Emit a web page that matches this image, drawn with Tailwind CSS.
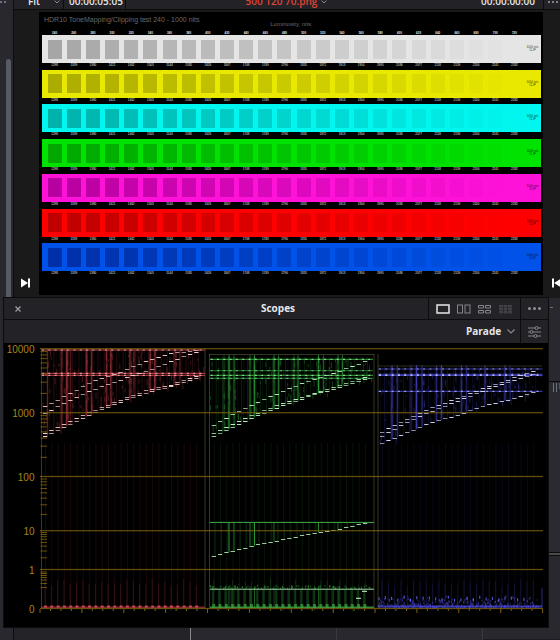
<!DOCTYPE html>
<html lang="en">
<head>
    <meta charset="UTF-8">
    <meta name="viewport" content="width=device-width, initial-scale=1.0">
    <title>Scopes</title>
    <script src="https://cdn.jsdelivr.net/npm/@tailwindcss/browser@4"></script>
</head>
<body class="h-screen overflow-hidden bg-[#28282e] font-['Open_Sans',sans-serif]">
    <div class="relative flex h-full flex-col">

        <!-- Viewer -->
        <div class="flex h-[298px] shrink-0">
            <div class="flex w-[13px] shrink-0 flex-col items-end">
                <div class="flex h-[59px] w-full gap-[2px] pt-px">
                    <span class="h-[2px] w-[2px] bg-gray-500"></span>
                    <span class="h-[2px] w-[2px] bg-gray-500"></span>
                </div>
                <div class="mr-[2px] w-[5px] flex-1 rounded-t bg-[#565b63]"></div>
            </div>

            <div class="flex min-w-0 flex-1 flex-col border-l border-[#0c0c0e] bg-[#1a1a1a]">
                <div class="flex h-[10px] items-end overflow-hidden border-b border-[#0c0c0e] bg-[#222227] text-[10px] leading-[15px] font-semibold text-gray-200">
                    <div class="flex flex-1 items-end">
                        <button class="flex h-[15px] w-[49px] items-center justify-between pl-[14px] pr-[3px]">Fit
                            <svg class="size-[6px]" viewBox="0 0 6 6" fill="none" stroke="#888"><path d="M.5 1.500 3 4l2.500-2.500"/></svg>
                        </button>
                        <span class="h-[15px] w-[63px] border-x border-[#0c0c0e] pl-[5px]">00:00:05:05</span>
                    </div>
                    <button class="flex h-[15px] items-center gap-1 pl-6 text-[#e04535]">500 120 70.png
                        <svg class="size-[6px]" viewBox="0 0 6 6" fill="none" stroke="#888"><path d="M.5 1.500 3 4l2.500-2.500"/></svg>
                    </button>
                    <span class="h-[15px] flex-1 pr-2 text-right">00:00:00:00</span>
                    <button class="flex h-[15px] w-[17px] items-center gap-[2px] border-l border-[#0c0c0e] pl-1" aria-label="Options">
                        <span class="size-[2px] rounded-full bg-gray-400"></span>
                        <span class="size-[2px] rounded-full bg-gray-400"></span>
                        <span class="size-[2px] rounded-full bg-gray-400"></span>
                    </button>
                </div>

                <div class="flex flex-1 pb-[3px] pt-[2px]">
                    <div class="flex w-[25px] items-end pb-[7px] pl-[7px]">
                        <button aria-label="Next clip">
                            <svg class="block h-[10px] w-[9px]" viewBox="0 0 9 10" fill="#fff"><path d="M0 .5 7 5 0 9.500zM7 .5h2v9H7z"/></svg>
                        </button>
                    </div>
                    <div class="min-w-0 flex-1 bg-black pr-[2px] pl-[3px] font-['Liberation_Sans',sans-serif]">
                        <div class="grid h-[19px] grid-cols-[1fr_auto_1fr] px-[2px] pt-[4px] text-[#686868]">
                            <h1 class="whitespace-nowrap text-[7px] leading-[8px]">HDR10 ToneMapping/Clipping test 240 - 1000 nits</h1>
                            <p class="pt-[4px] text-[6px] leading-[8px]">Luminosity, nits:</p>
                        </div>
                        <div id="topLabels" class="grid h-[4px] grid-cols-[repeat(25,1fr)_17px] pl-[3px] text-center text-[3px] leading-[4px] font-bold text-gray-200"></div>
                        <div id="bars" class="grid h-[243px] auto-rows-fr"></div>
                    </div>
                    <div class="flex w-[17px] items-end overflow-hidden pb-[7px] pl-[9px]">
                        <button aria-label="Previous clip">
                            <svg class="block h-[10px] w-[9px]" viewBox="0 0 9 10" fill="#fff"><path d="M9 .5 2 5l7 4.500zM0 .5h2v9H0z"/></svg>
                        </button>
                    </div>
                </div>
            </div>
        </div>

        <!-- Timeline panels, mostly behind the scopes window -->
        <div class="flex min-h-0 flex-1">
            <div class="w-[14px] border-r border-[#0c0c0e]"></div>
            <div class="w-[177px] border-r border-[#8a8a8e] bg-[#232328]"></div>
            <div class="w-[146px] border-r border-[#39393f]"></div>
            <div class="w-[146px] border-r border-[#39393f]"></div>
            <div class="flex flex-1 flex-col items-end border-b border-[#1c1c20]">
                <div class="h-[10px] w-[11px] pl-px"><div class="mt-[9px] h-px w-[3px] bg-gray-500"></div></div>
                <div class="h-[74px] w-[11px] border-b border-[#0c0c0e]"></div>
                <div class="flex h-[170px] w-[11px] gap-[2px] bg-[#2a2a30] pl-[4px]">
                    <span class="mt-px h-[9px] w-px bg-gray-500"></span>
                    <span class="mt-px h-[9px] w-px bg-gray-500"></span>
                    <span class="mt-px h-[6px] w-px bg-gray-600"></span>
                </div>
                <div class="h-[4px] w-[11px] border-y border-[#0c0c0e] bg-[#4a4a48]"></div>
            </div>
        </div>

        <!-- Scopes window -->
        <section class="absolute left-[3px] right-[11px] top-[297px] border border-[#0c0c0e] bg-[#222227]">
            <header class="grid h-[22px] grid-cols-[1fr_auto_1fr] items-center border-b border-[#0c0c0e]">
                <button class="ml-[11px] size-[6px]" aria-label="Close">
                    <svg class="block size-[6px]" viewBox="0 0 6 6" stroke="#a0a0a0" stroke-width="1.200"><path d="M.5.5l5 5M5.500.5l-5 5"/></svg>
                </button>
                <h2 class="pl-1 text-[10px] font-bold text-gray-200">Scopes</h2>
                <div class="flex h-full justify-end">
                    <div class="flex items-center gap-[7px] border-l border-[#0c0c0e] px-[7px]">
                        <button aria-label="Single view"><svg class="block h-[10px] w-[14px]" viewBox="0 0 14 10" fill="none" stroke="#e8e8e8" stroke-width="1.500"><rect x="1" y="1" width="12" height="8"/></svg></button>
                        <button aria-label="Two views"><svg class="block h-[10px] w-[14px]" viewBox="0 0 14 10" fill="none" stroke="#85858a"><rect x=".5" y="1" width="5" height="8"/><rect x="8" y="1" width="5" height="8"/></svg></button>
                        <button aria-label="Four views"><svg class="block h-[10px] w-[14px]" viewBox="0 0 14 10" fill="none" stroke="#85858a"><path d="M.5 1.500h5v2.500h-5zM7.500 1.500h5v2.500h-5zM.5 6.500h5v2.500h-5zM7.500 6.500h5v2.500h-5z"/></svg></button>
                        <button aria-label="Nine views"><svg class="block h-[10px] w-[14px]" viewBox="0 0 14 10" fill="#2c2c31" stroke="#45454b"><path d="M.5 1.500h3v1.500h-3zM5 1.500h3v1.500H5zM9.500 1.500h3v1.500h-3zM.5 4.500h3V6h-3zM5 4.500h3V6H5zM9.500 4.500h3V6h-3zM.5 7.500h3V9h-3zM5 7.500h3V9H5zM9.500 7.500h3V9h-3z"/></svg></button>
                    </div>
                    <button class="flex w-[28px] items-center justify-center gap-[2px] border-l border-[#0c0c0e]" aria-label="Scope options">
                        <span class="size-[3px] rounded-full bg-[#909095]"></span>
                        <span class="size-[3px] rounded-full bg-[#909095]"></span>
                        <span class="size-[3px] rounded-full bg-[#909095]"></span>
                    </button>
                </div>
            </header>
            <div class="flex h-[23px] justify-end">
                <label class="flex items-center pr-[5px]">
                    <select class="appearance-none bg-transparent text-[10px] font-bold text-gray-200" aria-label="Scope type">
                        <option>Parade</option>
                    </select>
                    <svg class="ml-[5px] h-[5px] w-[8px]" viewBox="0 0 8 5" fill="none" stroke="#8a8a90" stroke-width="1.200"><path d="M.5.5 4 4 7.500.5"/></svg>
                </label>
                <button class="flex w-[28px] items-center justify-center border-l border-[#0c0c0e]" aria-label="Scope settings">
                    <svg class="h-[12px] w-[13px]" viewBox="0 0 13 12" fill="#222227" stroke="#85858a"><path d="M0 2h13M0 6h13M0 10h13"/><circle cx="8.500" cy="2" r="1.500"/><circle cx="3.500" cy="6" r="1.500"/><circle cx="7.500" cy="10" r="1.500"/></svg>
                </button>
            </div>
            <svg id="parade" class="block h-auto w-full bg-black" viewBox="0 0 544 284" role="img" aria-label="RGB parade"></svg>
        </section>
    </div>

    <script>
        // ---- Test pattern ----
        const bars = [
            { color: '#e5e5e5', dark: '#a6a6a6' },
            { color: '#e8e800', dark: '#acac00' },
            { color: '#00f6ee', dark: '#00b2ac' },
            { color: '#00e200', dark: '#00a800' },
            { color: '#ff12d8', dark: '#b800a0' },
            { color: '#ff0000', dark: '#c00000' },
            { color: '#0052e8', dark: '#0030a8' },
        ];
        const nits = Array.from({ length: 25 }, (_, i) => 240 + i * 20);

        document.getElementById('topLabels').innerHTML = nits.map(n => `<span>${n}</span>`).join('');
        document.getElementById('bars').innerHTML = bars.map(bar => `
            <div>
                <div class="grid h-[28px] grid-cols-[repeat(25,1fr)_17px] items-center pl-[3px]" style="background:${bar.color}">
                    ${nits.map((n, i) => `<div class="mx-auto h-[19px] w-[14px]" style="background:${bar.dark};opacity:${1 - i / 24}"></div>`).join('')}
                    <div class="text-center text-[3px] leading-[3px] text-black/80">1000 nits<br>CLIP</div>
                </div>
                <div class="grid grid-cols-[repeat(25,1fr)_17px] pl-[3px] text-center text-[3px] leading-[5px] text-gray-200">
                    ${nits.map((n, i) => `<span>${1298 + i * 41}</span>`).join('')}
                </div>
            </div>
        `).join('');

        // ---- Parade scope ----
        const out = [];
        const rect = (x, y, w, h, fill, opacity = 1) =>
            out.push(`<rect x="${x.toFixed(1)}" y="${y.toFixed(1)}" width="${w.toFixed(1)}" height="${h.toFixed(1)}" fill="${fill}" opacity="${opacity.toFixed(2)}"/>`);

        let seed = 7;
        const rand = () => (seed = (seed * 16807) % 2147483647) / 2147483647;

        // value of a stair curve at column i, given every fourth column
        const stair = (pts, i) => {
            const k = Math.max(0, Math.min(i / 4, 5.99));
            const a = Math.floor(k);
            return pts[a] + (pts[a + 1] - pts[a]) * (k - a);
        };

        const channels = [
            {
                x: 37.500, end: 201, first: 41, color: '#c8404a', tint: '#ffd4d4', top: 7,
                lines: [[7, 1], [30.300, 1], [32.300, 1]],
                stairs: [
                    [63.700, 50.300, 37.300, 29, 18.700, 10.700, 7.500],
                    [70.300, 57.300, 46, 37, 28.700, 18.700, 9],
                    [90.700, 78.300, 67, 57, 47.700, 42, 33.700],
                    [93.500, 81, 69.500, 59, 50, 43.500, 35],
                ],
                streaks: [[43.500, .4], [57.700, .6], [63, 1], [66.500, .4], [82.700, .8], [87.700, .6], [102.700, .6], [107, .7], [126, .7], [130, .5], [146, .8], [151, .8], [171, .6], [176, .4]],
            },
            {
                x: 206, end: 369, first: 209.700, color: '#2fa83c', tint: '#c4ffc8', top: 14,
                lines: [[16.300, 1], [27.700, .7], [32.300, 1], [35.300, .8]],
                stairs: [
                    [82, 68.300, 56.300, 45.700, 36, 28, 18.700],
                    [90.700, 78.300, 67.500, 58, 50, 42, 34],
                    [93.700, 81, 70, 60.500, 51.500, 44.500, 36.500],
                ],
                streaks: [[220, .4], [225, 1], [230, .6], [246, .7], [250.500, .9], [270, .8], [274.500, .7], [290, .5], [294, .7], [314.500, 1], [319.500, .5], [334, .8], [338.500, .7]],
            },
            {
                x: 374, end: 538.500, first: 378, color: '#4242c0', tint: '#d8d8ff', top: 24,
                lines: [[26, .8], [31.300, .9], [32.500, 1], [48.300, 1]],
                stairs: [
                    [89, 76, 64.500, 55.500, 45.500, 37, 28.700],
                    [93.500, 79, 68, 58, 48, 39.500, 31.500],
                    [100.700, 89.700, 79.300, 72.300, 63.300, 57.300, 49.300],
                ],
                streaks: [[388, .9], [393.500, .6], [407, .5], [412.500, 1], [418, .6], [432.500, .6], [437.500, 1], [457.500, .7], [462.500, .5], [481, .8], [501, .8], [506, .4]],
            },
        ];
        const pitch = 6.300;

        channels.forEach(ch => {
            const width = ch.end - ch.x;
            const low = ch.stairs[ch.stairs.length - 1];
            const bottomAt = x => stair(low, (x - ch.first) / pitch);

            // faint trails over the whole height
            for (let i = 0; i < 25; i++) {
                const x = ch.first + i * pitch;
                rect(x + 2, ch.top, 1, bottomAt(x) - ch.top, ch.color, .2);
                rect(x - 2, ch.top, 1, bottomAt(x) - ch.top, ch.color, .1);
                rect(x, 100, 1, 165, ch.color, .12);
                rect(x - .5, 235 + rand() * 8, 1, 26, ch.color, .22);
            }
            ch.streaks.forEach(([x, a]) => {
                rect(x - 1.500, ch.top, 3, bottomAt(x) - ch.top, ch.color, a * .25);
                rect(x - .5, ch.top - 2, 1, bottomAt(x) - ch.top + 2, ch.color, a * .8);
            });
            // broken texture between peak line and stairs
            for (let n = 0; n < 350; n++) {
                const x = ch.x + rand() * width;
                const y = ch.top + rand() * (bottomAt(x) - ch.top);
                rect(x, y, 1, 2 + rand() * 5, rand() > .7 ? ch.color : '#000000', .35);
            }
            ch.lines.forEach(([y, a]) => {
                rect(ch.x, y - .5, width, 1, ch.color, a);
                for (let i = 0; i < 26; i++) rect(ch.first + i * pitch - 3, y - .5, 2, 1, ch.tint, a * .8);
            });
            ch.stairs.forEach(pts => {
                for (let i = 0; i < 25; i++) rect(ch.first + i * pitch - 2, Math.round(stair(pts, i) - .5), 4.300, 1, ch.tint, .6 + rand() * .4);
            });
        });

        // red floor
        rect(37, 263.500, 164, 1.500, '#b83040', .7);
        for (let i = 0; i < 25; i++) rect(40 + i * pitch, 262.500, 3, 2, '#ff6070', .7);

        // green low band
        rect(206, 178.900, 164, 1, '#3fae4a');
        const band = [213, 206.700, 200.300, 195.700, 190, 186, 180.300];
        for (let i = 0; i < 25; i++) {
            const x = 209.700 + i * pitch;
            const y = stair(band, i);
            rect(x + 1, 180, 1, y - 180, '#2fa83c', .2);
            rect(x - 2, Math.round(y - .5), 4.300, 1, '#b8f0bc', .85);
            rect(x - 2, 247, 2, 16, '#2fa83c', .25);
            rect(x - 1.500, 261, 3, 4, '#3fc04a', .6);
        }
        [[225, .9], [230, .5], [246, .7], [250.500, .9], [270, .6], [314.500, .8], [334, .6]].forEach(([x, a]) => {
            rect(x - .5, 180, 1, stair(band, (x - 209.700) / pitch) - 180, '#2fa83c', a);
            rect(x - .5, 243, 1, 22, '#2fa83c', a * .6);
        });
        for (let n = 0; n < 90; n++) rect(206 + rand() * 162, 242 + rand() * 3, 1, 1.500, '#2fa83c', .6);
        rect(206, 245.700, 164, 1, '#9fe0a4');
        rect(206, 263.500, 164, 1.500, '#3fae4a', .8);
        rect(352, 254.800, 5, 1, '#d0ffd0');
        rect(358, 247.800, 5, 1, '#d0ffd0');

        // blue floor
        for (let n = 0; n < 420; n++) {
            const h = rand() * rand() * 13;
            rect(374 + rand() * 160, 264 - h, 1, 2, '#4a4ad8', .25 + rand() * .4);
        }
        for (let i = 0; i < 24; i++) rect(374.500 + i * pitch, 252 + rand() * 4, 1, 3, '#6a6aff', .9);
        rect(374, 262.500, 164, 2, '#4646d8', .8);
        rect(537.500, 245, 1, 20, '#4646d8', .6);

        // channel frames
        [[37, 5], [200.500, 5], [205, 11], [369.500, 11], [373.500, 11]].forEach(([x, y]) => rect(x, y, 1, 265 - y, '#6a7048', .5));
        rect(205, 11, 165, 1, '#6a7048', .5);
        rect(374, 22.500, 164, 1, '#6a7048', .4);

        // graticule
        const levels = [['10000', 5.700], ['1000', 69.700], ['100', 133.500], ['10', 187.700], ['1', 226.500], ['0', 265.500]];
        levels.forEach(([label, y], i) => {
            rect(36, y - .6, 503, 1.200, '#8a6a10', .75);
            out.push(`<text x="30.500" y="${y + 4}" text-anchor="end" class="font-['Liberation_Sans',sans-serif] text-[10px]" fill="#a8841c">${label}</text>`);
            if (i < 4) {
                const next = levels[i + 1][1];
                for (let k = 2; k < 10; k++) rect(36.500, next - (next - y) * Math.log10(k) - .5, 6.500, 1, '#8a6a10', .75);
            }
        });
        [228.500, 230, 232, 234, 236.500, 240, 244].forEach(y => rect(36.500, y, 6.500, 1, '#8a6a10', .75));
        for (let i = 0; i <= 48; i++) rect(35.500 + i * 10.470, 266, 1, i % 4 ? 2 : 4, '#8a6a10', .9);

        document.getElementById('parade').innerHTML = out.join('');
    </script>
</body>
</html>
